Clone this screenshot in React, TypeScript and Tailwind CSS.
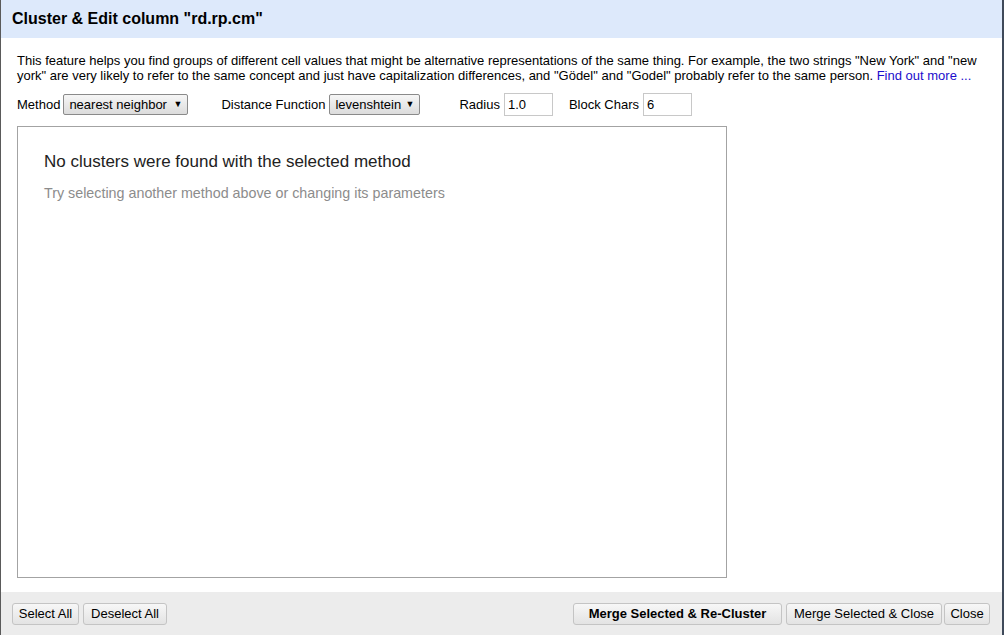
import React from 'react';

const btn =
  'h-[22px] px-[4px] whitespace-nowrap text-[13px] text-black bg-gradient-to-b from-[#f7f7f7] to-[#e3e3e3] border border-[#c4c4c4] rounded-[3px] leading-none';

const selectCls =
  'h-[21px] px-[5px] flex items-center justify-between whitespace-nowrap bg-gradient-to-b from-[#f6f6f6] to-[#dcdcdc] border border-[#8a8a8a] rounded-[2px] text-[13px]';

const App: React.FC = () => {
  return (
    <div className="w-[1004px] h-[635px] flex flex-col bg-white border-l border-[#5a5a5a] border-r-2 border-r-[#3f4a5a] overflow-hidden font-['Liberation_Sans',Arial,sans-serif] text-[13px] text-black">
      <div className="h-[38px] shrink-0 bg-[#dde9fb] flex items-center px-[11px]">
        <h1 className="text-[16px] font-bold">Cluster &amp; Edit column "rd.rp.cm"</h1>
      </div>

      <div className="flex-1 flex flex-col pl-[16px] pr-[8px] pt-[15px] pb-[14px] min-h-0">
        <p className="leading-[15px]">
          This feature helps you find groups of different cell values that might be alternative representations of the same thing. For example, the two strings "New York" and "new york" are very likely to refer to the same concept and just have capitalization differences, and "Gödel" and "Godel" probably refer to the same person.{' '}
          <a className="text-[#1a0dcc]" href="#">Find out more ...</a>
        </p>

        <div className="flex items-center mt-[10px] h-[23px]">
          <span>Method</span>
          <button className={`${selectCls} ml-[3px] w-[125px]`}>
            nearest neighbor <span className="text-[9px]">▼</span>
          </button>
          <span className="ml-[33px]">Distance Function</span>
          <button className={`${selectCls} ml-[4px] w-[91px]`}>
            levenshtein <span className="text-[9px]">▼</span>
          </button>
          <span className="ml-[39px]">Radius</span>
          <input readOnly value="1.0" className="ml-[4px] w-[49px] h-[23px] border border-[#c8c8c8] px-[3px] text-[13px] outline-none" />
          <span className="ml-[16px]">Block Chars</span>
          <input readOnly value="6" className="ml-[4px] w-[49px] h-[23px] border border-[#c8c8c8] px-[3px] text-[13px] outline-none" />
        </div>

        <div className="mt-[10px] w-[710px] flex-1 border border-[#a3a3a3] px-[26px] pt-[25px]">
          <p className="text-[17px] leading-[20px] text-[#222]">No clusters were found with the selected method</p>
          <p className="mt-[13px] text-[14.3px] leading-[17px] text-[#8c8c8c]">Try selecting another method above or changing its parameters</p>
        </div>
      </div>

      <div className="h-[43px] shrink-0 bg-[#ececec] flex items-center pl-[11px] pr-[12px]">
        <button className={`${btn} w-[67px]`}>Select All</button>
        <button className={`${btn} ml-[4px] w-[84px]`}>Deselect All</button>
        <div className="flex-1" />
        <button className={`${btn} w-[209px] font-bold`}>Merge Selected &amp; Re-Cluster</button>
        <button className={`${btn} ml-[4px] w-[156px]`}>Merge Selected &amp; Close</button>
        <button className={`${btn} ml-[2px] w-[46px]`}>Close</button>
      </div>
    </div>
  );
};

export default App;
